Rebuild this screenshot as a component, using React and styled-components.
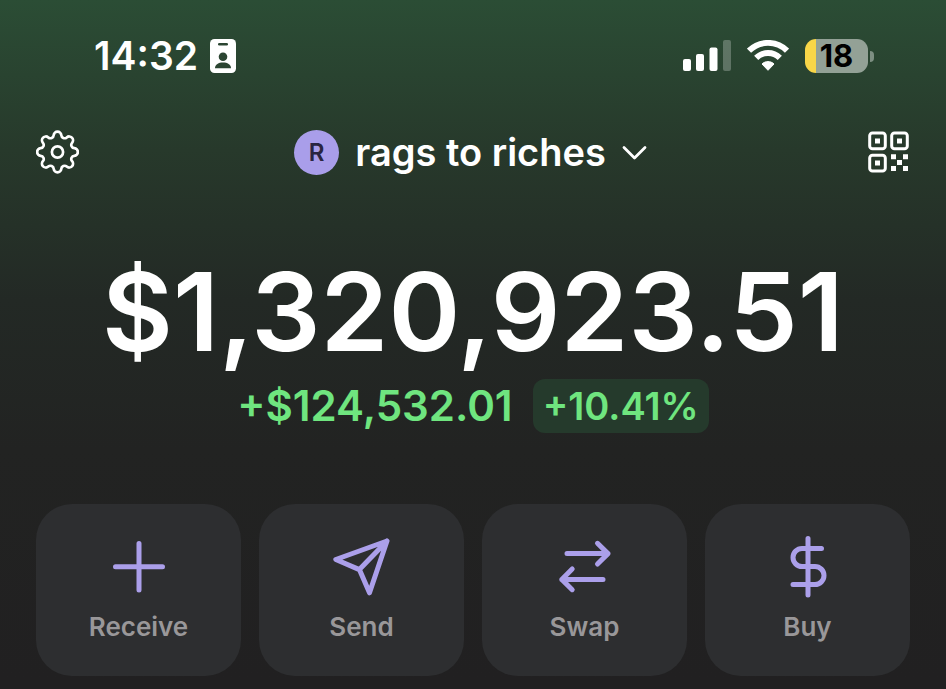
import React from 'react'
import styled, { createGlobalStyle } from 'styled-components'

const GlobalStyle = createGlobalStyle`
  * {
    box-sizing: border-box;
  }
  body {
    margin: 0;
    background: #212021;
    color: #ffffff;
    font-family: Inter, 'Liberation Sans', sans-serif;
  }
  button {
    border: none;
    padding: 0;
    background: none;
    color: inherit;
    font: inherit;
    cursor: pointer;
  }
`

// eight round teeth joined by round valleys
const gearPath = () => {
  const point = (deg) => {
    const a = (deg * Math.PI) / 180
    return `${(17.28 * Math.cos(a)).toFixed(2)} ${(17.28 * Math.sin(a)).toFixed(2)}`
  }
  let d = `M${point(-12.67)}`
  for (let deg = 0; deg < 360; deg += 45) {
    d += `A3.8 3.8 0 0 1 ${point(deg + 12.67)}`
    d += `A3.3 3.3 0 0 0 ${point(deg + 32.33)}`
  }
  return `${d}Z`
}

const GearIcon = () => (
  <svg width='43' height='44' viewBox='-21.5 -22 43 44' fill='none' stroke='#fff' strokeWidth='2.7'>
    <path d={gearPath()} strokeLinejoin='round' />
    <circle r='5.6' />
  </svg>
)

const QrIcon = () => (
  <svg width='42' height='42' viewBox='0 0 42 42' fill='#fff'>
    <g fill='none' stroke='#fff' strokeWidth='3'>
      <rect x='1.7' y='2' width='15.6' height='15.8' rx='2.8' />
      <rect x='23.7' y='2' width='15.6' height='15.8' rx='2.8' />
      <rect x='1.7' y='24.2' width='15.6' height='15.8' rx='2.8' />
    </g>
    <path d='M7 7.4h5v5H7zM29 7.4h5v5h-5zM7 29.6h5v5H7z' />
    <path d='M23 23.2h5v5h-5zM35 23.2h5v5h-5zM29 29h5v5h-5zM23 35h5v5h-5zM35 35h5v5h-5z' />
  </svg>
)

const BadgeIcon = () => (
  <svg width='26' height='34' viewBox='0 0 26 34'>
    <rect width='26' height='34' rx='4.5' fill='#fff' />
    <rect x='8' y='4' width='10' height='2.6' rx='1.3' fill='#2b4532' />
    <circle cx='13' cy='17.8' r='4.3' fill='#2b4532' />
    <path d='M5 29.2c0-3.8 3.6-5.7 8-5.7s8 1.9 8 5.7z' fill='#2b4532' />
  </svg>
)

const SignalIcon = () => (
  <svg width='48' height='32' viewBox='0 0 48 32' fill='#fff'>
    <rect x='0' y='19' width='8' height='12' rx='2' />
    <rect x='13' y='14' width='8' height='17' rx='2' />
    <rect x='26.5' y='7.5' width='8' height='23.5' rx='2' />
    <rect x='40' y='0' width='8' height='31' rx='2' opacity='0.25' />
  </svg>
)

const WifiIcon = () => (
  <svg width='42' height='32' viewBox='0 0 42 32'>
    <g fill='none' stroke='#fff' strokeWidth='5.9'>
      <path d='M2 10.7a27 27 0 0 1 38 0' />
      <path d='M9.2 17.9a16.7 16.7 0 0 1 23.6 0' />
    </g>
    <path
      d='M15 24c3.3-3.2 8.7-3.2 12 0l-6 6.3z'
      fill='#fff'
      stroke='#fff'
      strokeWidth='1'
      strokeLinejoin='round'
    />
  </svg>
)

const ChevronIcon = () => (
  <svg width='25' height='16' viewBox='0 0 25 16' fill='none' stroke='#fff' strokeWidth='2.8'>
    <path d='M2 3.5l10.5 10.5L23 3.5' strokeLinecap='round' strokeLinejoin='round' />
  </svg>
)

const icons = {
  receive: <path d='M32 8.5v46.5M8.5 31.7h47' />,
  send: <path d='M57 6L5.8 24.5L29.4 34.6L39.5 57.8ZM57 6L29.4 34.6' />,
  swap: <path d='M14 18.6H55M44.5 8.3L55 18.6L44.5 29M50 44.4H8.8M19.2 34L8.8 44.4L19.2 54.7' />,
  buy: <path d='M32 3.5v56.5M45.5 13.5H26a9 9 0 0 0 0 18h13a9 9 0 0 1 0 18H17' />,
}

const actions = [
  { label: 'Receive', icon: 'receive' },
  { label: 'Send', icon: 'send' },
  { label: 'Swap', icon: 'swap' },
  { label: 'Buy', icon: 'buy' },
]

const App = () => {
  return (
    <Page>
      <GlobalStyle />
      <StatusBar>
        <StatusGroup $gap={12}>
          <Time>14:32</Time>
          <BadgeIcon />
        </StatusGroup>
        <StatusGroup $gap={16}>
          <SignalIcon />
          <WifiIcon />
          <Battery>
            <BatteryBody>18</BatteryBody>
            <BatteryTip />
          </Battery>
        </StatusGroup>
      </StatusBar>

      <Header>
        <IconButton aria-label='Settings'>
          <GearIcon />
        </IconButton>
        <AccountButton>
          <Avatar>R</Avatar>
          <AccountName>rags to riches</AccountName>
          <ChevronIcon />
        </AccountButton>
        <IconButton aria-label='Scan QR code'>
          <QrIcon />
        </IconButton>
      </Header>

      <main>
        <Balance>$1,320,923.51</Balance>
        <ChangeRow>
          <Change>+$124,532.01</Change>
          <Percent>+10.41%</Percent>
        </ChangeRow>
        <Actions>
          {actions.map(({ label, icon }) => (
            <ActionButton key={label}>
              <ActionIcon viewBox='0 0 64 64'>{icons[icon]}</ActionIcon>
              {label}
            </ActionButton>
          ))}
        </Actions>
      </main>
    </Page>
  )
}

export default App

const Page = styled.div`
  min-height: 100vh;
  padding: 32px 36px 12px;
  background: linear-gradient(
    #2b4d35 0,
    #27392b 150px,
    #232925 300px,
    #222322 450px,
    #212021 680px
  );
`
const StatusBar = styled.div`
  display: flex;
  justify-content: space-between;
  align-items: center;
  height: 48px;
  padding: 0 36px 0 58px;
`
const StatusGroup = styled.div`
  display: flex;
  align-items: center;
  gap: ${({ $gap }) => $gap}px;
`
const Time = styled.span`
  font-size: 39px;
  font-weight: 600;
  line-height: 48px;
`
const Battery = styled.div`
  display: flex;
  align-items: center;
  gap: 2px;
`
const BatteryBody = styled.div`
  width: 63px;
  height: 34px;
  border-radius: 11px;
  background: linear-gradient(90deg, #f8d648 11px, #93a196 11px);
  color: #000000;
  font-size: 31px;
  font-weight: 700;
  line-height: 34px;
  text-align: center;
`
const BatteryTip = styled.div`
  width: 4px;
  height: 11px;
  border-radius: 0 4px 4px 0;
  background: #7d8f82;
`
const Header = styled.header`
  display: flex;
  justify-content: space-between;
  align-items: center;
  height: 48px;
  margin-top: 48px;
`
const IconButton = styled.button`
  display: flex;
`
const AccountButton = styled.button`
  display: flex;
  align-items: center;
  gap: 16px;
  padding-right: 6px;
`
const Avatar = styled.span`
  width: 45px;
  height: 45px;
  border-radius: 50%;
  background: #a99eea;
  color: #2a2540;
  font-size: 24px;
  font-weight: 600;
  line-height: 45px;
  text-align: center;
`
const AccountName = styled.span`
  font-size: 38px;
  font-weight: 600;
  line-height: 48px;
`
const Balance = styled.h1`
  margin: 67px 0 0;
  font-size: 109px;
  font-weight: 600;
  line-height: 136px;
  text-align: center;
`
const ChangeRow = styled.div`
  display: flex;
  justify-content: center;
  align-items: center;
  gap: 20px;
  color: #6fe57f;
`
const Change = styled.span`
  font-size: 42px;
  font-weight: 600;
  line-height: 54px;
`
const Percent = styled.span`
  padding: 0 10px;
  border-radius: 12px;
  background: #253a2c;
  font-size: 38px;
  font-weight: 600;
  line-height: 54px;
`
const Actions = styled.div`
  display: grid;
  grid-template-columns: repeat(4, 1fr);
  gap: 18px;
  margin-top: 71px;
`
const ActionButton = styled.button`
  display: flex;
  flex-direction: column;
  align-items: center;
  gap: 12px;
  padding: 31px 0 33px;
  border-radius: 36px;
  background: #2d2e30;
  color: #999799;
  font-size: 26px;
  font-weight: 600;
  line-height: 32px;
`
const ActionIcon = styled.svg`
  width: 64px;
  height: 64px;
  fill: none;
  stroke: #ab9fea;
  stroke-width: 5;
  stroke-linecap: round;
  stroke-linejoin: round;
`
